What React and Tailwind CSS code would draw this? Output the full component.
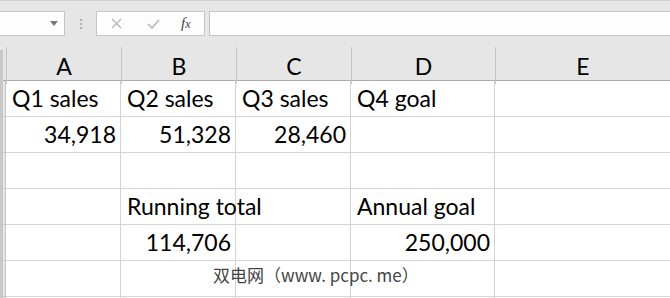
import React from "react";

const cols = ["A", "B", "C", "D", "E"];

const rows = [
  ["Q1 sales", "Q2 sales", "Q3 sales", "Q4 goal", ""],
  [{ n: "34,918" }, { n: "51,328" }, { n: "28,460" }, "", ""],
  ["", "", "", "", ""],
  ["", "Running total", "", "Annual goal", ""],
  ["", { n: "114,706" }, "", { n: "250,000" }, ""],
  ["", "", "", "", ""],
  ["", "", "", "", ""],
];

const gridCols = "grid grid-cols-[6px_115px_115px_115px_144px_1fr]";

function Cell({ v, last }) {
  const num = typeof v === "object";
  return (
    <div
      className={`h-[36px] border-b border-[#d4d4d4] ${last ? "" : "border-r"} flex items-center whitespace-nowrap overflow-visible ${
        num ? "justify-end pr-[4px]" : "pl-[6px]"
      }`}
    >
      {num ? v.n : v}
    </div>
  );
}

export default function App() {
  return (
    <div className="relative w-[670px] h-[298px] overflow-hidden bg-white text-black" style={{ fontFamily: "Lato, 'Liberation Sans', sans-serif" }}>
      {/* formula bar */}
      <div className="h-[47px] bg-[#e6e6e6] border-t border-[#d0d0d0] pt-[10px] flex items-start">
        <div className="w-[65px] h-[25px] bg-[#fdfdfd] border border-[#c6c6c6] border-l-0 flex items-center justify-end pr-[6px]">
          <svg width="8" height="5" viewBox="0 0 8 5"><path d="M0 0h8L4 5z" fill="#777" /></svg>
        </div>
        <div className="w-[31px] h-[25px] flex flex-col items-center justify-center gap-[2px]">
          <span className="w-[2px] h-[2px] bg-[#b0b0b0]" />
          <span className="w-[2px] h-[2px] bg-[#b0b0b0]" />
          <span className="w-[2px] h-[2px] bg-[#b0b0b0]" />
        </div>
        <div className="w-[109px] h-[25px] bg-[#fdfdfd] border border-[#c6c6c6] flex items-center">
          <svg className="ml-[14px]" width="11" height="11" viewBox="0 0 11 11">
            <path d="M1 1l9 9M10 1l-9 9" stroke="#b5b5b5" strokeWidth="1.3" />
          </svg>
          <svg className="ml-[25px]" width="13" height="10" viewBox="0 0 13 10">
            <path d="M1 5l4 4 7-8" stroke="#b5b5b5" strokeWidth="1.6" fill="none" />
          </svg>
          <span className="ml-[21px] text-[15px] leading-none italic text-[#444]" style={{ fontFamily: "'Liberation Serif', serif" }}>
            f<span className="text-[12px]">x</span>
          </span>
        </div>
        <div className="ml-[4px] flex-1 h-[25px] bg-[#fdfdfd] border border-[#c6c6c6] border-r-0" />
      </div>

      {/* column headers */}
      <div className={`${gridCols} h-[34px] bg-[#e6e6e6] border-b border-[#ababab] text-[23px]`}>
        <div className="flex">
          <div className="w-[3px] mt-[3px] bg-[#c8c8c8]" />
        </div>
        {cols.map((c) => (
          <div key={c} className="flex items-center justify-center border-l border-[#c6c6c6] pt-[2px]">
            {c}
          </div>
        ))}
      </div>

      {/* cells */}
      <div className="text-[23px]">
        {rows.map((r, i) => (
          <div key={i} className={gridCols}>
            <div className="h-[36px] bg-[#e6e6e6] border-r border-b border-[#c6c6c6] flex">
              <div className="w-[3px] bg-[#c8c8c8]" />
            </div>
            {r.map((v, j) => (
              <Cell key={j} v={v} last={j === 4} />
            ))}
          </div>
        ))}
      </div>

      {/* watermark */}
      <div
        className="absolute left-[213px] top-[262px] text-[17px] text-[#444] whitespace-nowrap"
        style={{ fontFamily: "'Noto Sans CJK SC', 'Liberation Sans', sans-serif" }}
      >
        双电网（www. pcpc. me）
      </div>
    </div>
  );
}
